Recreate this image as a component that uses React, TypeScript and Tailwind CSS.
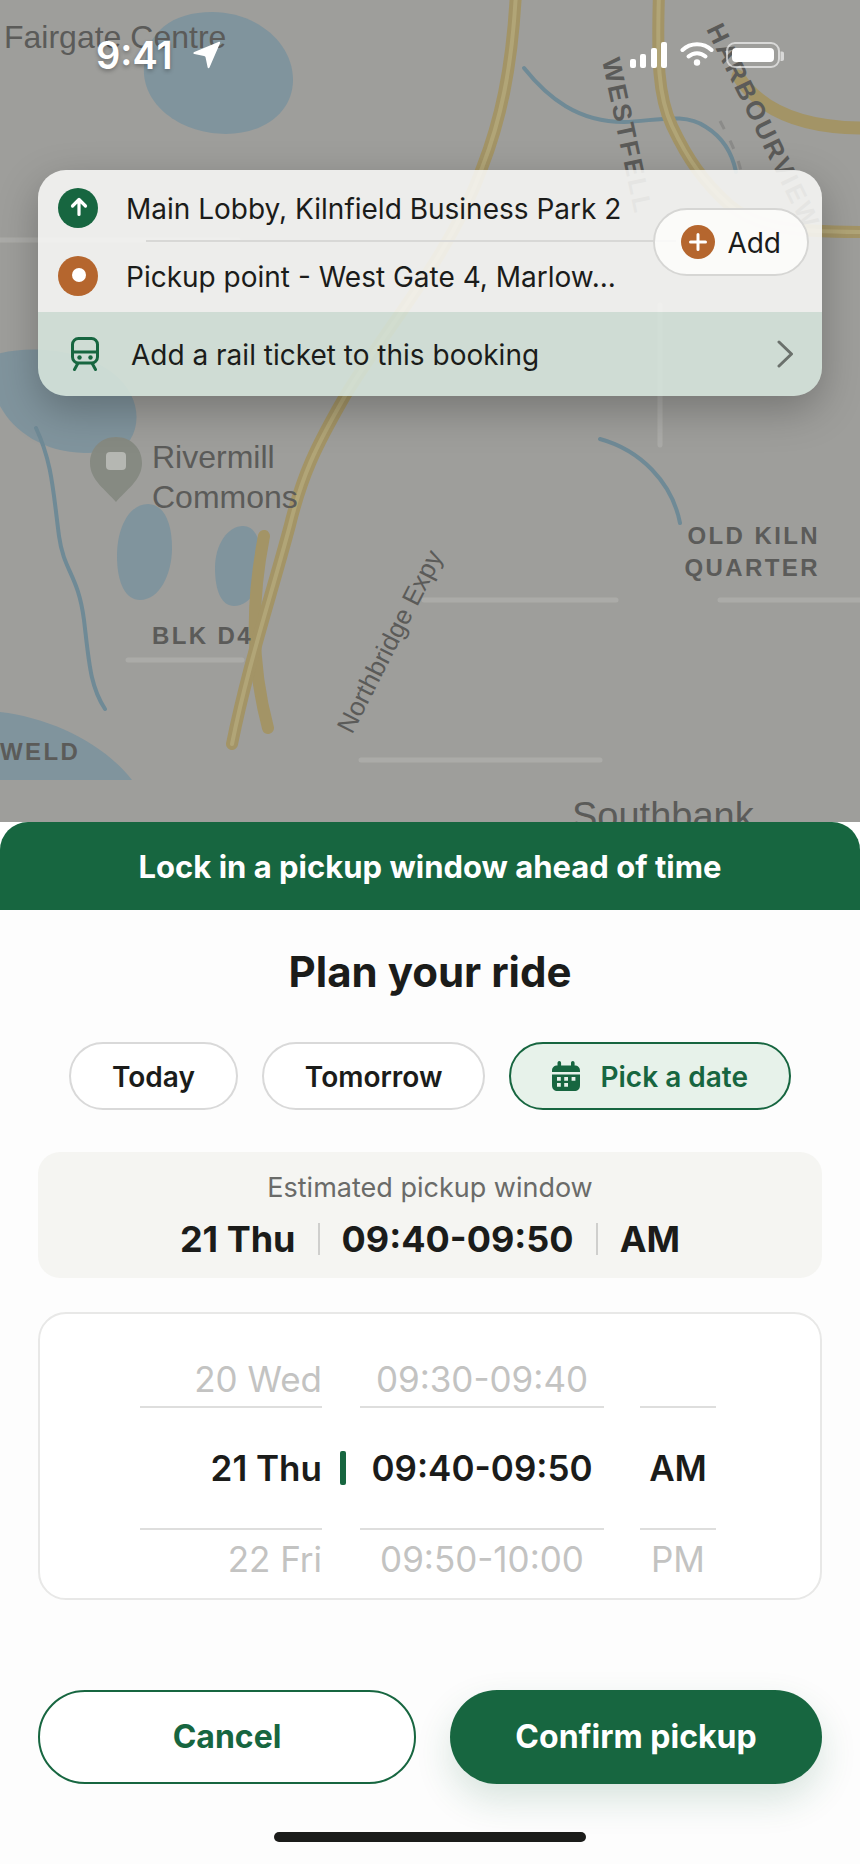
import { useState } from "react";

const roadLines = [
  "M0 240H238",
  "M660 305V445",
  "M128 660H242",
  "M424 600H616",
  "M720 600H860",
  "M361 760H600",
];

function CityMap() {
  return (
    <svg
      className="absolute inset-0 h-full w-full"
      viewBox="0 0 860 822"
      preserveAspectRatio="xMidYMin slice"
      role="img"
      aria-label="Map of the pickup area"
    >
      <rect width="860" height="822" fill="#9e9e9b" />
      <g fill="#80949d">
        <path d="M144 66C147 32 172 12 212 12C256 12 293 42 293 80C293 112 264 134 226 134C182 134 141 106 144 66Z" />
        <path d="M-10 356C30 343 84 350 114 374C136 392 143 419 130 440C124 448 108 453 84 453C44 452 14 432 0 406Z" />
        <path d="M148 504C163 504 172 521 172 548C172 575 159 600 140 600C126 600 117 584 117 556C117 526 130 504 148 504Z" />
        <path d="M243 526C255 526 262 540 262 566C262 590 248 606 234 606C222 606 215 592 215 568C215 544 228 526 243 526Z" />
        <path d="M0 712C52 718 104 744 132 780H0Z" />
      </g>
      <g fill="none" stroke="#6f8a96" strokeWidth="4" strokeLinecap="round">
        <path d="M36 428C52 462 53 490 59 536C64 572 78 574 84 620C89 662 90 686 105 709" />
        <path d="M524 68C548 98 578 122 624 122C656 121 684 112 706 127C722 137 732 152 736 172" />
        <path d="M600 439C640 450 672 482 680 523" />
      </g>
      <g fill="none" stroke="#ababa8" strokeWidth="5" strokeLinecap="round">
        {roadLines.map((d) => (
          <path key={d} d={d} />
        ))}
      </g>
      <path d="M720 121C730 140 738 155 742 176" fill="none" stroke="#8b8b89" strokeWidth="3" strokeDasharray="9 13" />
      <g fill="none" strokeLinecap="round" stroke="#a39466">
        <path d="M264 536C252 598 250 660 268 728" strokeWidth="12" />
        <path d="M738 76C760 110 800 128 864 128" strokeWidth="13" />
        <path d="M516 -8C512 70 500 122 482 168C450 256 390 322 345 396C315 448 302 476 290 525C270 600 248 665 232 744" strokeWidth="12" />
        <path d="M659 -8C657 60 658 96 672 126C688 160 704 182 728 204C756 228 790 232 866 232" strokeWidth="12" />
      </g>
      <g fill="none" strokeLinecap="round" stroke="#b1a577" strokeWidth="4">
        <path d="M516 -8C512 70 500 122 482 168C450 256 390 322 345 396C315 448 302 476 290 525C270 600 248 665 232 744" />
        <path d="M659 -8C657 60 658 96 672 126C688 160 704 182 728 204C756 228 790 232 866 232" />
      </g>
      <path d="M116 437C131 437 142 448 142 463C142 480 126 490 116 502C106 490 90 480 90 463C90 448 101 437 116 437Z" fill="#868a82" />
      <rect x="106" y="452" width="20" height="18" rx="4" fill="#b5b7b2" />
      <g className="fill-[#5b5b59] font-['Liberation_Sans',sans-serif] text-[32px]">
        <text x="4" y="48">Fairgate Centre</text>
        <text x="152" y="468">Rivermill</text>
        <text x="152" y="508">Commons</text>
        <text x="572" y="829" className="text-[38px]">Southbank</text>
        <text transform="translate(352 735) rotate(-63)" className="text-[26px]">Northbridge Expy</text>
      </g>
      <g className="fill-[#5b5b59] font-['Liberation_Sans',sans-serif] text-[24px] font-bold tracking-widest">
        <text x="152" y="644">BLK D4</text>
        <text x="0" y="760">WELD</text>
        <text x="820" y="544" textAnchor="end">OLD KILN</text>
        <text x="820" y="576" textAnchor="end">QUARTER</text>
        <text transform="translate(602 60) rotate(78)" className="text-[26px]">WESTFELL</text>
        <text transform="translate(706 29) rotate(64)" className="text-[26px]">HARBOURVIEW</text>
      </g>
    </svg>
  );
}

function StatusBar() {
  return (
    <header className="relative flex h-[110px] items-center justify-between pr-[76px] pl-[96px] text-white">
      <div className="flex items-center gap-5">
        <span className="text-[38px] leading-[44px] font-semibold [text-shadow:0_2px_4px_rgba(0,0,0,0.3)]">9:41</span>
        <svg className="h-7 w-7" viewBox="0 0 28 28" fill="currentColor" aria-hidden="true">
          <path d="M25.400 .9C26.700 .3 27.500 1 27 2.300L16.600 26.200C16.100 27.500 14.900 27.500 14.600 26.200L12.600 16.600C12.400 15.600 12 15.200 11 15L1.400 13C.1 12.700 0 11.500 1.300 11Z" />
        </svg>
      </div>
      <div className="flex items-center gap-3">
        <svg className="h-[26px] w-[38px]" viewBox="0 0 38 26" fill="currentColor" aria-label="Signal" role="img">
          <rect x="0" y="17" width="6" height="9" rx="2" />
          <rect x="10" y="12" width="6" height="14" rx="2" />
          <rect x="21" y="6" width="6" height="20" rx="2" />
          <rect x="31" y="0" width="6" height="26" rx="2" />
        </svg>
        <svg className="h-[26px] w-[34px]" viewBox="0 0 34 26" fill="none" stroke="currentColor" strokeWidth="4" strokeLinecap="round" aria-label="Wi-Fi" role="img">
          <path d="M2.500 8C10.500 .4 23.500 .4 31.500 8" />
          <path d="M8.500 14.500C13.500 10 20.500 10 25.500 14.500" />
          <circle cx="17" cy="20.500" r="3.200" fill="currentColor" stroke="none" />
        </svg>
        <svg className="h-[26px] w-[58px]" viewBox="0 0 58 26" aria-label="Battery" role="img">
          <rect x="1" y="1" width="52" height="24" rx="8" fill="none" stroke="#fff" strokeOpacity="0.6" strokeWidth="2" />
          <rect x="6" y="6" width="42" height="14" rx="4" fill="#fff" />
          <path d="M54.500 9.500H56C57.300 9.500 58 10.300 58 11.500V17C58 18.200 57.300 19 56 19H54.500Z" fill="#fff" fillOpacity="0.6" />
        </svg>
      </div>
    </header>
  );
}

function RouteCard() {
  return (
    <section className="relative mx-[38px] mt-[60px] overflow-hidden rounded-[28px] text-[28px] leading-10 text-[#1b1c1a] shadow-[0_14px_40px_rgba(0,0,0,0.25)]">
      <div className="relative bg-[#f8f8f6]/88 px-5 pt-[18px] pb-4">
        <div className="flex h-10 items-center gap-[28px]">
          <svg className="h-10 w-10 shrink-0" viewBox="0 0 40 40" fill="none" aria-hidden="true">
            <circle cx="20" cy="20" r="20" fill="#176640" />
            <path d="M21 26.500V12M14.500 18L21 11.500L27.500 18" stroke="#fff" strokeWidth="3.200" strokeLinecap="round" strokeLinejoin="round" />
          </svg>
          <span className="pt-[2px] whitespace-nowrap">Main Lobby, Kilnfield Business Park 2</span>
        </div>
        <div className="mt-3 mr-[126px] ml-[88px] h-[2px] bg-[#d8d8d6]" />
        <div className="mt-[14px] flex h-10 items-center gap-[28px]">
          <svg className="h-10 w-10 shrink-0" viewBox="0 0 40 40" aria-hidden="true">
            <circle cx="20" cy="20" r="20" fill="#b5662e" />
            <circle cx="21" cy="19" r="7" fill="#fff" />
          </svg>
          <span className="pt-[2px] whitespace-nowrap">Pickup point - West Gate 4, Marlow...</span>
        </div>
        <button
          type="button"
          className="absolute top-[38px] right-[13px] flex h-[68px] items-center gap-3 rounded-full border-2 border-[#d6d6d4] bg-[#fcfcfb]/90 px-[26px]"
        >
          <svg className="h-[34px] w-[34px]" viewBox="0 0 34 34" fill="none" aria-hidden="true">
            <circle cx="17" cy="17" r="17" fill="#b5662e" />
            <path d="M17 9.500V24.500M9.500 17H24.500" stroke="#fff" strokeWidth="3" strokeLinecap="round" />
          </svg>
          <span className="pt-[2px]">Add</span>
        </button>
      </div>
      <button type="button" className="flex h-[84px] w-full items-center bg-[#d6e5dc]/88 pr-7 pl-[33px] text-left">
        <svg className="h-[34px] w-[28px]" viewBox="0 0 28 34" fill="none" stroke="#176640" strokeWidth="3" strokeLinecap="round" aria-hidden="true">
          <rect x="1.500" y="1.500" width="25" height="24.500" rx="6" />
          <path d="M1.500 15H26.500" />
          <path d="M6.500 27L3.500 32.500M21.500 27L24.500 32.500" />
          <circle cx="8.500" cy="20.500" r="2.200" fill="#176640" stroke="none" />
          <circle cx="19.500" cy="20.500" r="2.200" fill="#176640" stroke="none" />
        </svg>
        <span className="ml-8 flex-1 pt-[2px]">Add a rail ticket to this booking</span>
        <svg className="h-[28px] w-[18px]" viewBox="0 0 18 28" fill="none" stroke="#6b716c" strokeWidth="3" strokeLinecap="round" strokeLinejoin="round" aria-hidden="true">
          <path d="M3 2L15.500 14L3 26" />
        </svg>
      </button>
    </section>
  );
}

function CalendarIcon() {
  return (
    <svg className="h-[30px] w-[28px]" viewBox="0 0 28 30" fill="currentColor" aria-hidden="true">
      <path d="M0 11V10C0 6.500 2 4.600 5.500 4.600V2C5.500.9 6.300 0 7.300 0S9.100.9 9.100 2V4.600H19V2C19 .9 19.800 0 20.800 0S22.600.9 22.600 2V4.600C26 4.600 28 6.500 28 10V11Z" />
      <path
        fillRule="evenodd"
        d="M0 13.500H28V24C28 28 26 30 22 30H6C2 30 0 28 0 24ZM5 16H8.800V19.800H5ZM12.200 16H16V19.800H12.200ZM19.600 16H23.400V19.800H19.600ZM5 22H8.800V25.800H5ZM12.200 22H16V25.800H12.200Z"
      />
    </svg>
  );
}

const chipBase = "flex h-[68px] items-center gap-5 rounded-full border-2 px-[41px] text-[28px] font-semibold";
const days = ["Today", "Tomorrow", "Pick a date"];

function DayChips() {
  const [selected, setSelected] = useState("Pick a date");
  return (
    <div className="mt-[42px] flex justify-center gap-6">
      {days.map((day) => (
        <button
          key={day}
          type="button"
          aria-pressed={selected === day}
          onClick={() => setSelected(day)}
          className={`${chipBase} ${
            selected === day ? "border-[#176640] bg-[#e7f2ea] text-[#176640]" : "border-[#d9d9d9] bg-white text-[#1b1c1a]"
          }`}
        >
          {day === "Pick a date" && <CalendarIcon />}
          <span className="pt-[2px]">{day}</span>
        </button>
      ))}
    </div>
  );
}

function WheelColumn({ values, className, label }: { values: string[]; className: string; label: string }) {
  return (
    <div role="group" aria-label={label} className={`flex flex-col text-[35px] leading-[44px] whitespace-nowrap ${className}`}>
      <div className="h-[51px] border-b-2 border-[#dededd] text-[#c3c3c2]">{values[0]}</div>
      <div className="h-[120px] py-[38px] font-semibold text-[#1b1c1a]">{values[1]}</div>
      <div className="border-t-2 border-[#dededd] pt-[7px] text-[#c3c3c2]">{values[2]}</div>
    </div>
  );
}

export default function App() {
  return (
    <main className="min-h-screen bg-white font-['Inter',sans-serif] text-[#1b1c1a]">
      <div className="relative overflow-hidden pb-[426px]">
        <CityMap />
        <StatusBar />
        <RouteCard />
      </div>

      <section className="overflow-hidden rounded-t-[28px] bg-[#fdfdfd] pb-[22px]">
        <p className="bg-[#176640] pt-[23px] pb-[21px] text-center text-[31px] leading-[44px] font-bold text-white">
          Lock in a pickup window ahead of time
        </p>

        <div className="px-[38px]">
          <h1 className="mt-[34px] text-center text-[42px] leading-[56px] font-bold">Plan your ride</h1>
          <DayChips />

          <div className="mt-[42px] rounded-[22px] bg-[#f5f5f2] pt-[18px] pb-[17px] text-center">
            <p className="text-[27px] leading-9 text-[#6a6b69]">Estimated pickup window</p>
            <div className="mt-[11px] flex items-center justify-center gap-[22px] text-[36px] leading-[44px] font-bold">
              <span>21 Thu</span>
              <span className="h-8 w-[2px] bg-[#cfcfcd]" />
              <span>09:40-09:50</span>
              <span className="h-8 w-[2px] bg-[#cfcfcd]" />
              <span>AM</span>
            </div>
          </div>

          <div className="mt-[34px] flex justify-center rounded-[28px] border-2 border-[#e8e8e7] bg-white pt-[43px] pr-1 pb-[17px]">
            <WheelColumn label="Day" className="w-[182px] text-right" values={["20 Wed", "21 Thu", "22 Fri"]} />
            <div className="mt-[94px] flex w-[38px] justify-center pl-1">
              <span className="h-[34px] w-[6px] rounded-[2px] bg-[#176640]" />
            </div>
            <WheelColumn label="Time" className="w-[244px] text-center" values={["09:30-09:40", "09:40-09:50", "09:50-10:00"]} />
            <WheelColumn label="Half of day" className="ml-9 w-[76px] text-center" values={["", "AM", "PM"]} />
          </div>

          <div className="mt-[90px] grid grid-cols-[378fr_372fr] gap-[34px] text-[32px] font-bold">
            <button type="button" className="h-[94px] rounded-full border-2 border-[#176640] bg-white text-[#176640]">
              Cancel
            </button>
            <button
              type="button"
              className="h-[94px] rounded-full bg-[#176640] text-white shadow-[0_16px_36px_rgba(23,102,64,0.16)]"
            >
              Confirm pickup
            </button>
          </div>
        </div>

        <div className="mx-auto mt-12 h-[10px] w-[312px] rounded-full bg-[#1b1c1a]" />
      </section>
    </main>
  );
}
